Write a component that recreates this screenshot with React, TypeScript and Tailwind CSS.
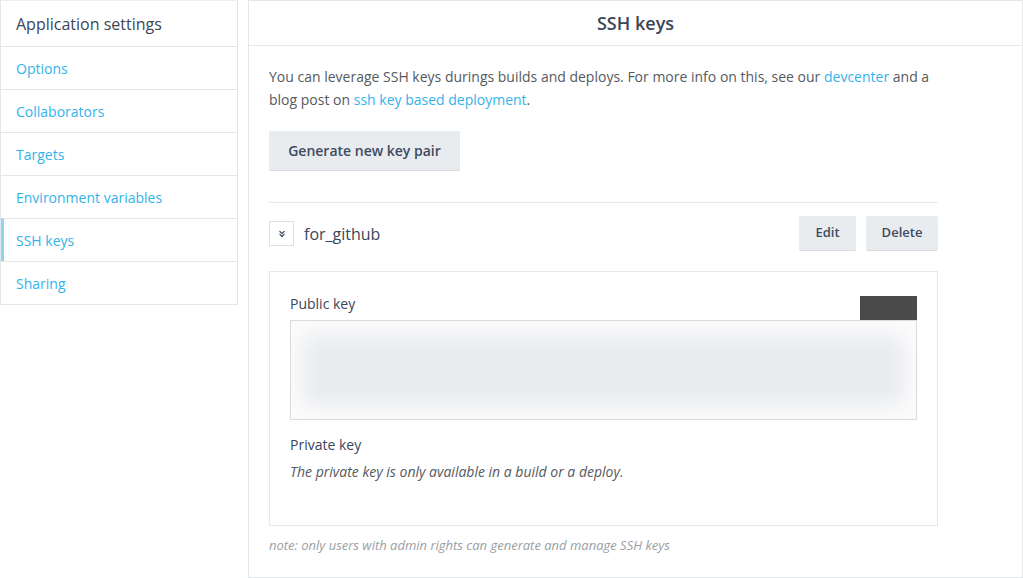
import React from "react";
import { ChevronsDown } from "lucide-react";

const navItems = ["Options", "Collaborators", "Targets", "Environment variables", "SSH keys", "Sharing"];

export default function App() {
  return (
    <div className="flex h-[578px] w-[1023px] gap-[10px] bg-white font-['Open_Sans',sans-serif]">
      <aside className="w-[238px] self-start border border-[#e4e7ea] border-t-[#eceef0]">
        <div className="flex h-[45px] items-center pl-[15px] text-[16px] text-[#3b4659]">Application settings</div>
        {navItems.map((item) => (
          <div
            key={item}
            className={
              item === "SSH keys"
                ? "flex h-[43px] items-center border-t border-[#e4e7ea] border-l-[3px] border-l-[#8fd5f1] pl-[12px] text-[14px] text-[#33b3ea]"
                : "flex h-[43px] items-center border-t border-[#e4e7ea] pl-[15px] text-[14px] text-[#33b3ea]"
            }
          >
            {item}
          </div>
        ))}
      </aside>

      <main className="flex h-[578px] flex-1 flex-col border border-[#e4e7ea]">
        <div className="flex h-[45px] items-center justify-center border-b border-[#e4e7ea] text-[18px] font-semibold text-[#3b4659]">
          SSH keys
        </div>
        <div className="w-[709px] px-[20px] pt-[19px]">
          <p className="text-[14px] leading-[23px] text-[#555a61]">
            You can leverage SSH keys durings builds and deploys. For more info on this, see our{" "}
            <span className="text-[#33b3ea]">devcenter</span> and a blog post on{" "}
            <span className="text-[#33b3ea]">ssh key based deployment</span>.
          </p>
          <button className="mt-[20px] h-[40px] w-[191px] rounded-[2px] border-b border-[#d8dbdf] bg-[#e9ecef] text-[14px] font-semibold text-[#3d4a62]">
            Generate new key pair
          </button>

          <div className="mt-[31px] border-t border-[#e6e8eb] pt-[13px]">
            <div className="flex items-center">
              <div className="flex h-[25px] w-[25px] items-center justify-center border border-[#dcdfe3]">
                <ChevronsDown size={10} strokeWidth={3} color="#3d4a62" />
              </div>
              <div className="ml-[10px] text-[16px] text-[#3b4659]">for_github</div>
              <div className="ml-auto flex gap-[10px]">
                <button className="h-[35px] w-[57px] rounded-[2px] border-b border-[#d8dbdf] bg-[#e9ecef] text-[13px] font-semibold text-[#3d4a62]">
                  Edit
                </button>
                <button className="h-[35px] w-[72px] rounded-[2px] border-b border-[#d8dbdf] bg-[#e9ecef] text-[13px] font-semibold text-[#3d4a62]">
                  Delete
                </button>
              </div>
            </div>

            <div className="mt-[20px] h-[255px] border border-[#e6e8eb] px-[20px] pt-[24px]">
              <div className="flex items-start justify-between">
                <div className="text-[14px] leading-[16px] text-[#3b4659]">Public key</div>
                <div className="h-[24px] w-[57px] bg-[#4a4a4a]" />
              </div>
              <div className="h-[100px] overflow-hidden border border-[#d9dcdf] bg-[#fbfbfc] px-[12px] py-[14px]">
                <div className="h-full w-full rounded-[12px] bg-[#e9ebee] blur-[9px]" />
              </div>
              <div className="mt-[15px] text-[14px] leading-[20px] text-[#3b4659]">Private key</div>
              <div className="mt-[7px] text-[14px] italic leading-[20px] text-[#555a61]">
                The private key is only available in a build or a deploy.
              </div>
            </div>
            <div className="mt-[10px] text-[13px] italic text-[#9a9ea3]">
              note: only users with admin rights can generate and manage SSH keys
            </div>
          </div>
        </div>
      </main>
    </div>
  );
}
